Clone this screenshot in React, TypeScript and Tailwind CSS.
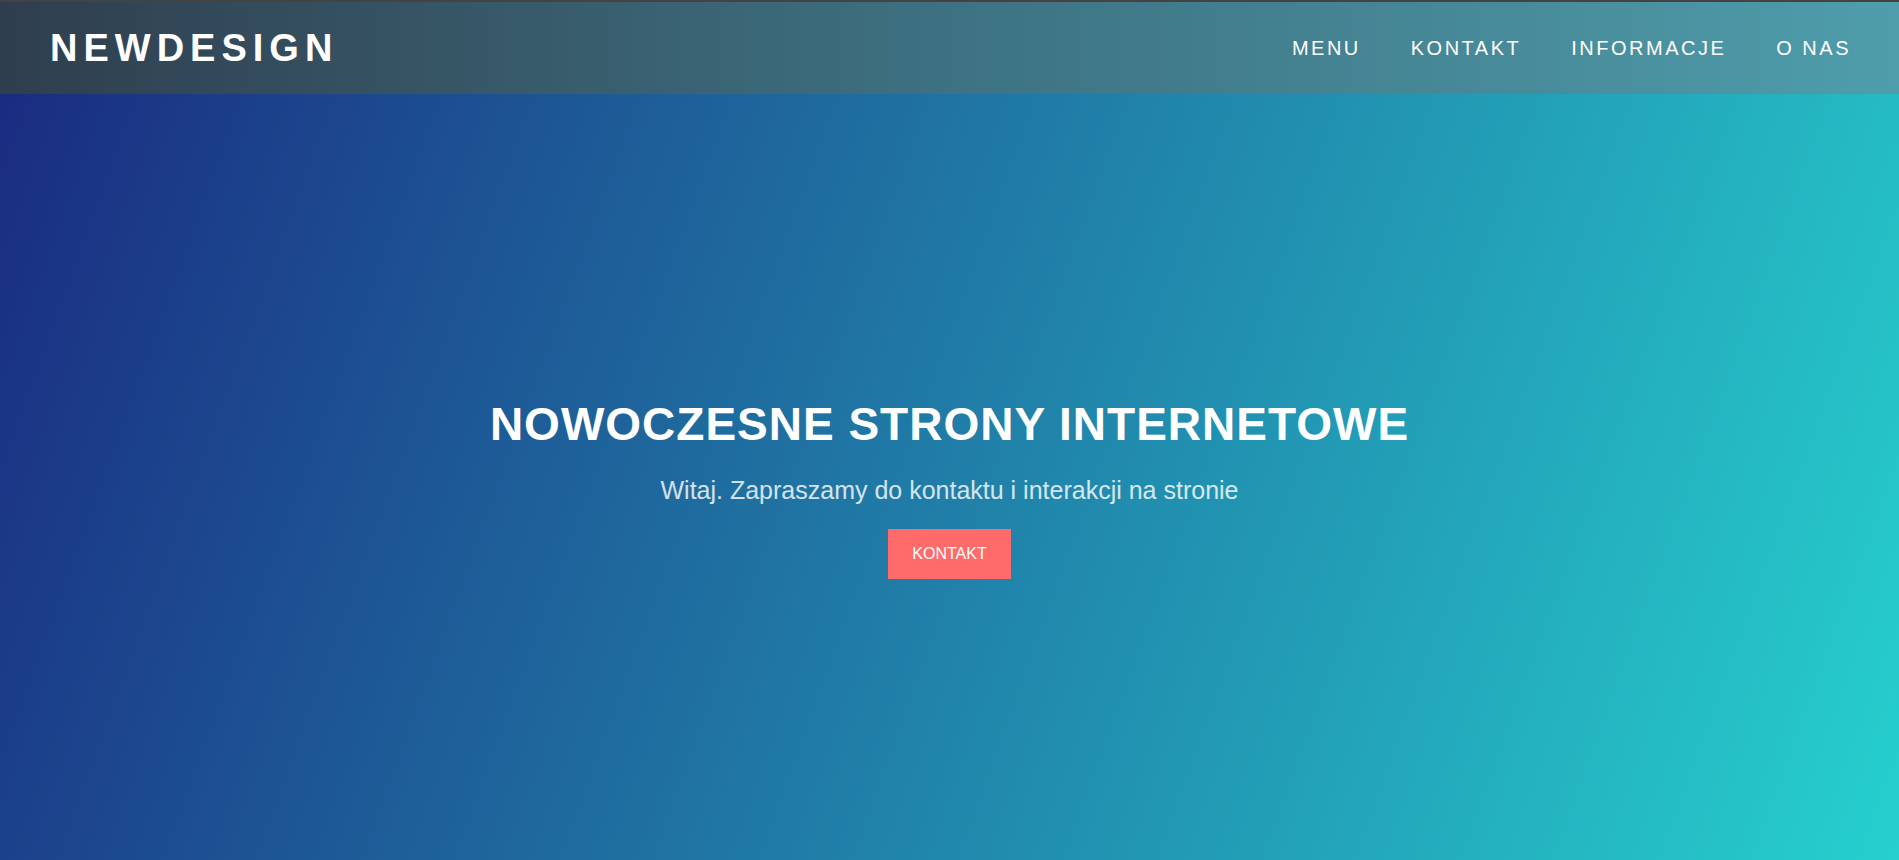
import React from "react";

const navItems = ["MENU", "KONTAKT", "INFORMACJE", "O NAS"];

export default function App() {
  return (
    <div className="min-h-screen flex flex-col font-['Liberation_Sans',Arial,sans-serif] bg-[linear-gradient(110deg,#1a2980,#26d0ce)]">
      {/* Header */}
      <header className="h-[94px] flex items-center justify-between pl-[50px] pr-[48px] border-t-2 border-[#434343] bg-gradient-to-r from-[#2f3e4e] via-[#3d7282] to-[#4f9dab]">
        <div className="text-white font-bold text-[38px] tracking-[6px]">
          NEWDESIGN
        </div>
        <nav className="flex items-center gap-[50px]">
          {navItems.map((item) => (
            <a
              key={item}
              href="#"
              className="text-white text-[20px] tracking-[2.5px]"
            >
              {item}
            </a>
          ))}
        </nav>
      </header>

      {/* Hero */}
      <main className="flex-1 flex flex-col items-center justify-center pt-[23px]">
        <h1 className="text-white font-bold text-[46px] leading-[1.15] tracking-[1px]">
          NOWOCZESNE STRONY INTERNETOWE
        </h1>
        <p className="mt-[25px] text-white/80 text-[25px] leading-[1.15]">
          Witaj. Zapraszamy do kontaktu i interakcji na stronie
        </p>
        <a
          href="#"
          className="mt-[25px] bg-[#ff6b6b] text-white text-[16px] leading-[20px] px-[24px] py-[15px]"
        >
          KONTAKT
        </a>
      </main>
    </div>
  );
}
